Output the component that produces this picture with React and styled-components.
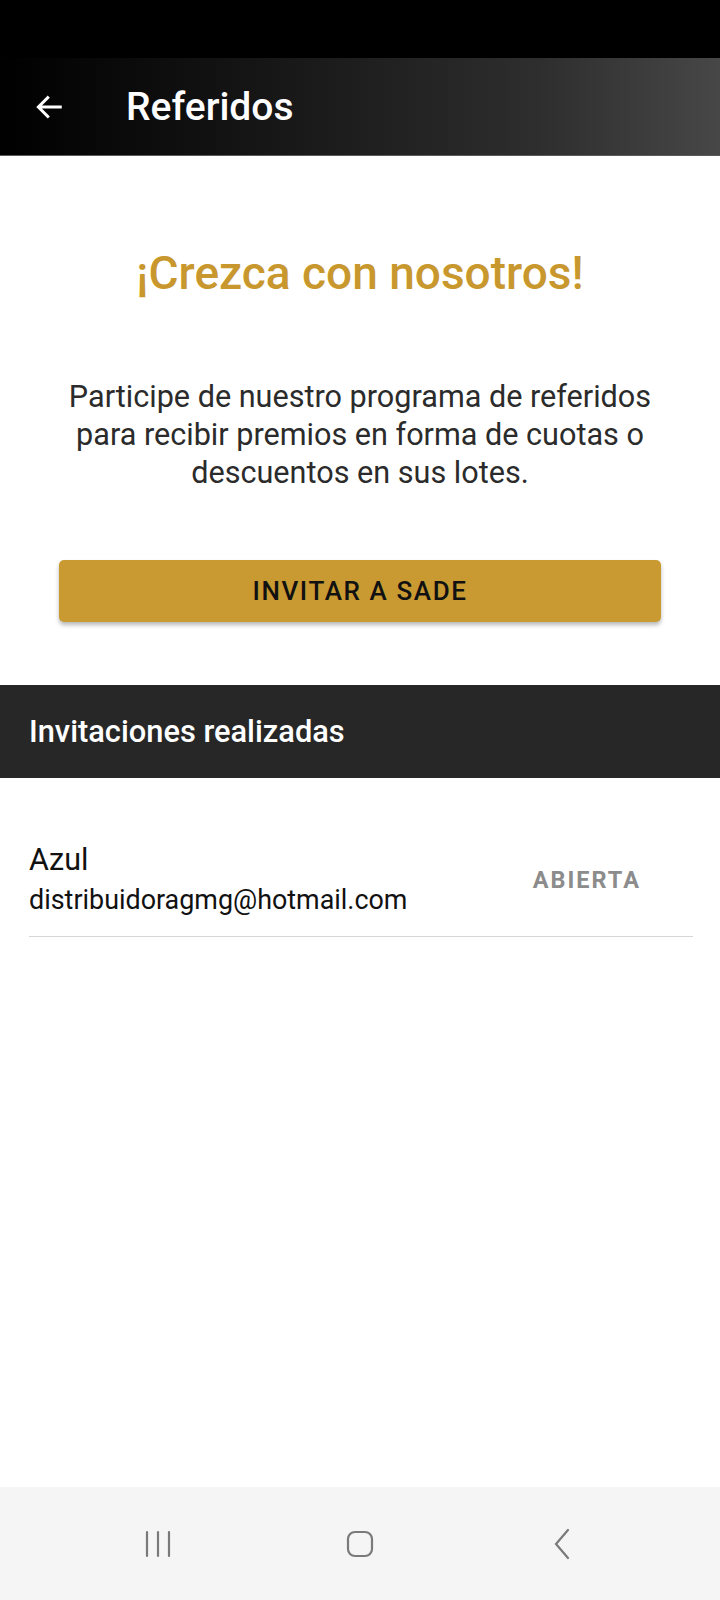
import React from "react";
import styled, { createGlobalStyle } from "styled-components";

const GlobalStyle = createGlobalStyle`
    html, body {
        margin: 0;
        padding: 0;
        background: #ffffff;
        font-family: Roboto, "Noto Sans", "Liberation Sans", sans-serif;
    }
    * {
        box-sizing: border-box;
    }
`;

const Screen = styled.div`
    width: 720px;
    min-height: 1600px;
    display: flex;
    flex-direction: column;
    background: #ffffff;
`;

const StatusBar = styled.div`
    height: 58px;
    background: #000000;
`;

const AppBar = styled.header`
    height: 98px;
    display: flex;
    align-items: center;
    padding-left: 32px;
    background: linear-gradient(90deg, #000000 0%, #151515 35%, #2e2e2e 75%, #474747 100%);
    border-bottom: 1px solid #5a5a5a;
`;

const BackButton = styled.button`
    width: 34px;
    height: 34px;
    padding: 0;
    border: none;
    background: transparent;
    display: flex;
    align-items: center;
    justify-content: center;
    margin-right: 60px;
`;

const AppTitle = styled.h1`
    margin: 0;
    color: #ffffff;
    font-size: 39px;
    font-weight: 500;
`;

const Intro = styled.section`
    display: flex;
    flex-direction: column;
    align-items: center;
    padding: 90px 59px 63px;
`;

const Headline = styled.h2`
    margin: 0;
    color: #c8982f;
    font-size: 46px;
    font-weight: 500;
    line-height: 54px;
`;

const Lead = styled.p`
    margin: 78px 0 0;
    color: #2b2b2b;
    font-size: 30.6px;
    line-height: 38px;
    text-align: center;
    white-space: nowrap;
`;

const PrimaryButton = styled.button`
    margin-top: 68px;
    width: 100%;
    height: 62px;
    border: none;
    border-radius: 5px;
    background: #c99932;
    color: #111111;
    font-family: inherit;
    font-size: 26px;
    font-weight: 500;
    letter-spacing: 1.6px;
    box-shadow: 0 3px 4px rgba(0, 0, 0, 0.28);
`;

const SectionHeader = styled.div`
    height: 93px;
    display: flex;
    align-items: center;
    padding-left: 29px;
    background: #272727;
    color: #ffffff;
    font-size: 30.8px;
    font-weight: 500;
`;

const List = styled.ul`
    list-style: none;
    margin: 0;
    padding: 62px 27px 0 29px;
`;

const Row = styled.li`
    display: flex;
    align-items: center;
    justify-content: space-between;
    padding-bottom: 16px;
    border-bottom: 1px solid #d6d6d6;
`;

const Who = styled.div`
    display: flex;
    flex-direction: column;
`;

const Name = styled.span`
    color: #111111;
    font-size: 30.5px;
    line-height: 40px;
`;

const Email = styled.span`
    color: #111111;
    font-size: 26.9px;
    line-height: 40px;
`;

const Status = styled.span`
    margin-right: 52px;
    color: #8c8c8c;
    font-size: 23.5px;
    font-weight: 700;
    letter-spacing: 2px;
`;

const NavBar = styled.nav`
    margin-top: auto;
    height: 113px;
    background: #f5f5f5;
    display: flex;
    align-items: center;
    justify-content: center;
    gap: 142px;
`;

const NavKey = styled.div`
    width: 60px;
    display: flex;
    justify-content: center;
`;

const invitations = [
    { name: "Azul", email: "distribuidoragmg@hotmail.com", status: "ABIERTA" },
];

const App = () => {
    return (
        <Screen>
            <GlobalStyle />
            <StatusBar />
            <AppBar>
                <BackButton aria-label="Volver">
                    <svg width="30" height="30" viewBox="0 0 24 24" fill="none" stroke="#ffffff" strokeWidth="2.4" strokeLinecap="square">
                        <path d="M21 12H4M11 4.5L3.5 12l7.5 7.5" />
                    </svg>
                </BackButton>
                <AppTitle>Referidos</AppTitle>
            </AppBar>
            <Intro>
                <Headline>¡Crezca con nosotros!</Headline>
                <Lead>
                    Participe de nuestro programa de referidos
                    <br />
                    para recibir premios en forma de cuotas o
                    <br />
                    descuentos en sus lotes.
                </Lead>
                <PrimaryButton>INVITAR A SADE</PrimaryButton>
            </Intro>
            <SectionHeader>Invitaciones realizadas</SectionHeader>
            <List>
                {invitations.map((inv) => (
                    <Row key={inv.email}>
                        <Who>
                            <Name>{inv.name}</Name>
                            <Email>{inv.email}</Email>
                        </Who>
                        <Status>{inv.status}</Status>
                    </Row>
                ))}
            </List>
            <NavBar>
                <NavKey>
                    <svg width="30" height="32" viewBox="0 0 30 32" fill="none" stroke="#7a7a7a" strokeWidth="2.2" strokeLinecap="round">
                        <path d="M4 4v24M15 4v24M26 4v24" />
                    </svg>
                </NavKey>
                <NavKey>
                    <svg width="30" height="32" viewBox="0 0 30 32" fill="none" stroke="#7a7a7a" strokeWidth="2.2">
                        <rect x="3" y="4" width="24" height="24" rx="7" />
                    </svg>
                </NavKey>
                <NavKey>
                    <svg width="20" height="34" viewBox="0 0 20 34" fill="none" stroke="#7a7a7a" strokeWidth="2.2" strokeLinecap="round">
                        <path d="M16 3L4 17l12 14" />
                    </svg>
                </NavKey>
            </NavBar>
        </Screen>
    );
};

export default App;
